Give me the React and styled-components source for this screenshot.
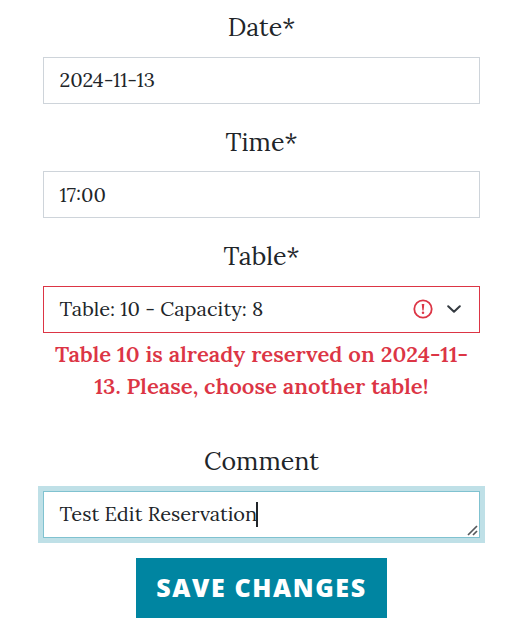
import React from "react";
import styled, { createGlobalStyle } from "styled-components";

const GlobalStyle = createGlobalStyle`
  *, *::before, *::after { box-sizing: border-box; }
  body {
    margin: 0;
    background: #fff;
    color: #212529;
    font-family: Lora, "Liberation Serif", serif;
  }
`;

const Form = styled.form`
  display: flex;
  flex-direction: column;
  width: 437px;
  height: 635px;
  margin: 0 0 0 43px;
  padding-top: 8px;
`;

const Field = styled.div`
  display: flex;
  flex-direction: column;
  margin-bottom: ${({ $gap }) => $gap}px;
`;

const Label = styled.label`
  height: 39px;
  margin-bottom: ${({ $gap = 10 }) => $gap}px;
  font-size: 25px;
  line-height: 39px;
  text-align: center;
  white-space: nowrap;
`;

const borders = { normal: "#ced4da", invalid: "#dc3545", focus: "#80c2d0" };

const Control = styled.div`
  display: flex;
  align-items: center;
  height: 47px;
  padding: 0 16px ${({ $bottom = 1 }) => $bottom}px 15.5px;
  border: 1px solid ${({ $state = "normal" }) => borders[$state]};
  box-shadow: ${({ $state }) => ($state === "focus" ? "0 0 0 5px #bfe0e7" : "none")};
  background: #fff;
`;

const Value = styled.span`
  font-size: 20px;
  line-height: 32px;
  white-space: nowrap;
`;

const Icons = styled.span`
  display: flex;
  align-items: center;
  gap: 14.5px;
  margin: 0 2px 0 auto;
`;

const Caret = styled.span`
  width: 2px;
  height: 25px;
  margin-left: -1px;
  background: #212529;
`;

const ResizeGrip = styled.svg`
  align-self: flex-end;
  margin: 0 -15px 0 auto;
`;

const ErrorText = styled.div`
  margin: 5px 0 1px;
  color: #dc3545;
  font-size: 22px;
  font-weight: 600;
  line-height: 32px;
  letter-spacing: 0.04px;
  text-align: center;
  white-space: nowrap;
`;

const ErrorLine = styled.div``;

const SaveButton = styled.button`
  align-self: center;
  width: 251px;
  height: 60px;
  padding: 0 0 2px;
  border: 0;
  background: #0085a1;
  color: #fff;
  font: 800 25px/58px "Open Sans", sans-serif;
  letter-spacing: 1.6px;
  text-transform: uppercase;
  white-space: nowrap;
`;

const WarningIcon = () => (
  <svg width="20" height="20" viewBox="0 0 20 20" fill="none" stroke="#dc3545">
    <circle cx="10" cy="10" r="8.7" strokeWidth="1.8" />
    <path d="M8.7 5h2.6l-.7 6.4H9.4z" fill="#dc3545" stroke="none" />
    <circle cx="10" cy="13.8" r="1.25" fill="#dc3545" stroke="none" />
  </svg>
);

const ChevronIcon = () => (
  <svg width="14" height="8" viewBox="0 0 14 8" fill="none" stroke="#343a40" strokeWidth="2" strokeLinecap="round" strokeLinejoin="round">
    <path d="M1.2 1.2 7 6.8l5.8-5.6" />
  </svg>
);

export default function App() {
  return (
    <>
      <GlobalStyle />
      <Form>
        <Field $gap={19}>
          <Label>Date*</Label>
          <Control><Value>2024-11-13</Value></Control>
        </Field>
        <Field $gap={19}>
          <Label $gap={9}>Time*</Label>
          <Control $bottom={0}><Value>17:00</Value></Control>
        </Field>
        <Field $gap={39}>
          <Label>Table*</Label>
          <Control $state="invalid">
            <Value>Table: 10 - Capacity: 8</Value>
            <Icons><WarningIcon /><ChevronIcon /></Icons>
          </Control>
          <ErrorText>
            <ErrorLine>Table 10 is already reserved on 2024-11-</ErrorLine>
            <ErrorLine>13. Please, choose another table!</ErrorLine>
          </ErrorText>
        </Field>
        <Field $gap={20}>
          <Label>Comment</Label>
          <Control $state="focus">
            <Value>Test Edit Reservation</Value>
            <Caret />
            <ResizeGrip width="11" height="11" viewBox="0 0 11 11" stroke="#55595c" strokeWidth="1.7">
              <path d="M1 10 10 1M6 10l4-4" />
            </ResizeGrip>
          </Control>
        </Field>
        <SaveButton type="button">Save changes</SaveButton>
      </Form>
    </>
  );
}
